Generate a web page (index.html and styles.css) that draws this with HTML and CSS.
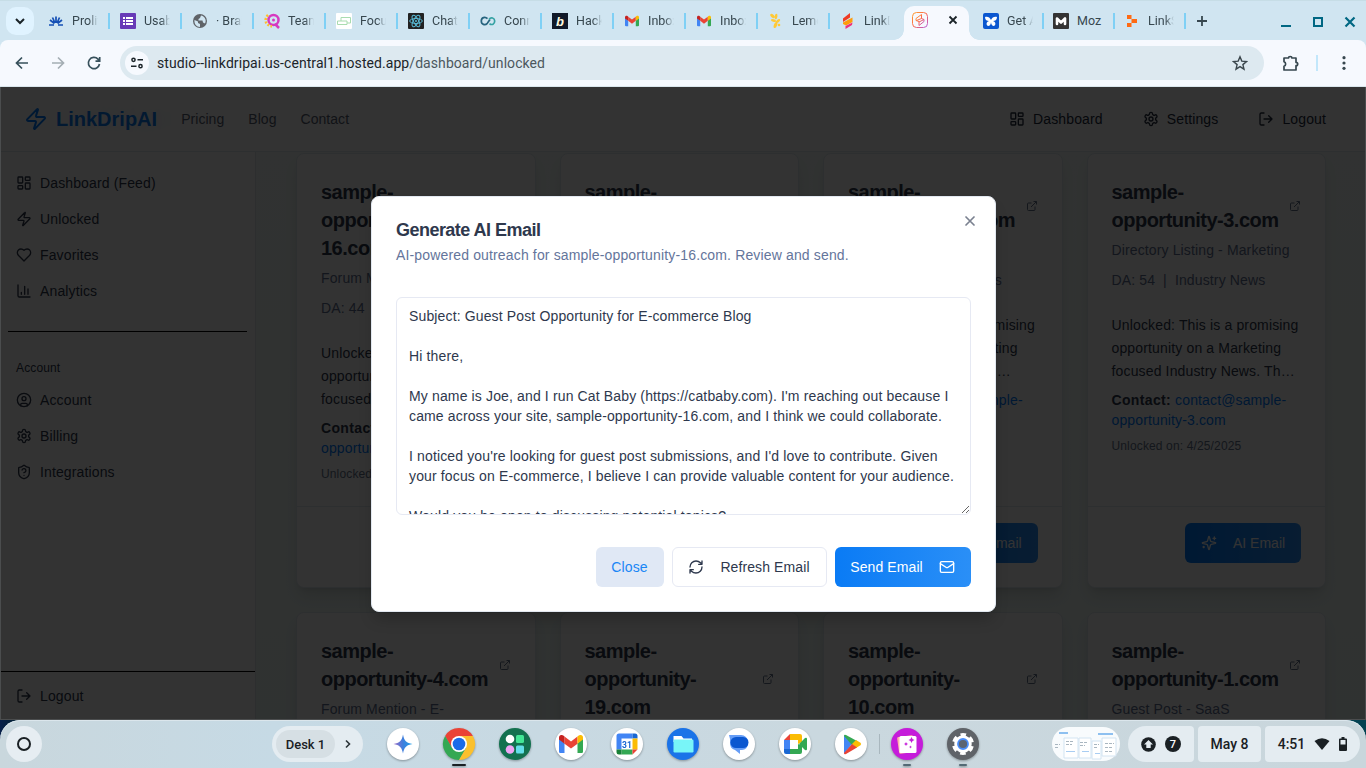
FILE: index.html
```html
<!DOCTYPE html>
<html lang="en">
<head>
<meta charset="utf-8">
<title>LinkDripAI</title>
<link rel="stylesheet" href="styles.css">
</head>
<body>
<svg class="defs" width="0" height="0">
<defs>
<linearGradient id="warm" x1="0" y1="0" x2="1" y2="1"><stop offset="0" stop-color="#ffa12e"/><stop offset=".5" stop-color="#f9654c"/><stop offset="1" stop-color="#b45be0"/></linearGradient>
<linearGradient id="ldg" x1="0" y1="0" x2="0" y2="1"><stop offset="0" stop-color="#ee3a24"/><stop offset=".5" stop-color="#ff9c0a"/><stop offset="1" stop-color="#f0177a"/></linearGradient>
<linearGradient id="gem" x1="0" y1="0" x2="1" y2="0"><stop offset="0" stop-color="#a06bc4"/><stop offset=".5" stop-color="#3f7fdd"/><stop offset="1" stop-color="#1ba0e8"/></linearGradient>
<symbol id="dash" viewBox="0 0 24 24"><rect width="7" height="9" x="3" y="3" rx="1"/><rect width="7" height="5" x="14" y="3" rx="1"/><rect width="7" height="9" x="14" y="12" rx="1"/><rect width="7" height="5" x="3" y="16" rx="1"/></symbol>
<symbol id="zap" viewBox="0 0 24 24"><path d="M4 14a1 1 0 0 1-.78-1.63l9.9-10.2a.5.5 0 0 1 .86.46l-1.92 6.02A1 1 0 0 0 13 10h7a1 1 0 0 1 .78 1.63l-9.9 10.2a.5.5 0 0 1-.86-.46l1.92-6.02A1 1 0 0 0 11 14z"/></symbol>
<symbol id="heart" viewBox="0 0 24 24"><path d="M19 14c1.49-1.46 3-3.21 3-5.5A5.5 5.5 0 0 0 16.5 3c-1.76 0-3 .5-4.5 2-1.5-1.5-2.74-2-4.5-2A5.5 5.5 0 0 0 2 8.5c0 2.3 1.5 4.05 3 5.5l7 7Z"/></symbol>
<symbol id="chart" viewBox="0 0 24 24"><path d="M3 3v16a2 2 0 0 0 2 2h16M18 17V9M13 17V5M8 17v-3"/></symbol>
<symbol id="user" viewBox="0 0 24 24"><circle cx="12" cy="12" r="10"/><circle cx="12" cy="10" r="3"/><path d="M7 20.662V19a2 2 0 0 1 2-2h6a2 2 0 0 1 2 2v1.662"/></symbol>
<symbol id="gear" viewBox="0 0 24 24"><path d="M12.22 2h-.44a2 2 0 0 0-2 2v.18a2 2 0 0 1-1 1.73l-.43.25a2 2 0 0 1-2 0l-.15-.08a2 2 0 0 0-2.73.73l-.22.38a2 2 0 0 0 .73 2.73l.15.1a2 2 0 0 1 1 1.72v.51a2 2 0 0 1-1 1.74l-.15.09a2 2 0 0 0-.73 2.73l.22.38a2 2 0 0 0 2.73.73l.15-.08a2 2 0 0 1 2 0l.43.25a2 2 0 0 1 1 1.73V20a2 2 0 0 0 2 2h.44a2 2 0 0 0 2-2v-.18a2 2 0 0 1 1-1.73l.43-.25a2 2 0 0 1 2 0l.15.08a2 2 0 0 0 2.73-.73l.22-.39a2 2 0 0 0-.73-2.73l-.15-.08a2 2 0 0 1-1-1.74v-.5a2 2 0 0 1 1-1.74l.15-.09a2 2 0 0 0 .73-2.73l-.22-.38a2 2 0 0 0-2.73-.73l-.15.08a2 2 0 0 1-2 0l-.43-.25a2 2 0 0 1-1-1.73V4a2 2 0 0 0-2-2z"/><circle cx="12" cy="12" r="3"/></symbol>
<symbol id="shield" viewBox="0 0 24 24"><path d="M20 13c0 5-3.5 7.5-7.66 8.95a1 1 0 0 1-.67-.01C7.5 20.5 4 18 4 13V6a1 1 0 0 1 1-1c2 0 4.5-1.2 6.24-2.72a1.17 1.17 0 0 1 1.52 0C14.51 3.81 17 5 19 5a1 1 0 0 1 1 1zM9.1 9a3 3 0 0 1 5.82 1c0 2-3 3-3 3M12 17h.01"/></symbol>
<symbol id="out" viewBox="0 0 24 24"><path d="M9 21H5a2 2 0 0 1-2-2V5a2 2 0 0 1 2-2h4M16 17l5-5-5-5M21 12H9"/></symbol>
<symbol id="ext" viewBox="0 0 24 24"><path d="M15 3h6v6M10 14 21 3M18 13v6a2 2 0 0 1-2 2H5a2 2 0 0 1-2-2V8a2 2 0 0 1 2-2h6"/></symbol>
<symbol id="spark" viewBox="0 0 24 24"><path d="M9.937 15.5A2 2 0 0 0 8.5 14.063l-6.135-1.582a.5.5 0 0 1 0-.962L8.5 9.936A2 2 0 0 0 9.937 8.5l1.582-6.135a.5.5 0 0 1 .963 0L14.063 8.5A2 2 0 0 0 15.5 9.937l6.135 1.581a.5.5 0 0 1 0 .964L15.5 14.063a2 2 0 0 0-1.437 1.437l-1.582 6.135a.5.5 0 0 1-.963 0zM20 3v4M22 5h-4M4 17v2M5 18H3"/></symbol>
<symbol id="refresh" viewBox="0 0 24 24"><path d="M3 12a9 9 0 0 1 9-9 9.75 9.75 0 0 1 6.74 2.74L21 8M21 3v5h-5M21 12a9 9 0 0 1-9 9 9.75 9.75 0 0 1-6.74-2.74L3 16M8 16H3v5"/></symbol>
<symbol id="mail" viewBox="0 0 24 24"><rect width="20" height="16" x="2" y="4" rx="2"/><path d="m22 7-8.97 5.7a1.94 1.94 0 0 1-2.06 0L2 7"/></symbol>
<symbol id="x" viewBox="0 0 24 24"><path d="M18 6 6 18M6 6l12 12"/></symbol>
<symbol id="gmail" viewBox="0 0 24 18"><path fill="#4285f4" d="M0 3v13.4C0 17.3.7 18 1.6 18H5.500V8.500Z"/><path fill="#34a853" d="M24 3v13.400c0 .9-.7 1.600-1.600 1.600H18.500V8.500Z"/><path fill="#ea4335" d="M5.500 8.700V1.600L12 6.500l6.500-4.900v7.100L12 13.600Z"/><path fill="#c5221f" d="M0 2.500C0 .3 2.500-.8 4.300.6L5.500 1.600v7.100L0 4.600Z"/><path fill="#fbbc04" d="M24 2.500C24 .3 21.500-.8 19.700.6L18.500 1.600v7.100L24 4.600Z"/></symbol>
</defs>
</svg>
<div class="screen">
<div class="tabstrip">
  <div class="tabsearch"><svg width="12" height="12" viewBox="0 0 12 12" fill="none" stroke="#1b2429" stroke-width="2"><path d="M2 4 6 8l4-4"/></svg></div>
  <div class="tabs">
    <div class="tab"><svg class="fav" viewBox="0 0 16 16" fill="none" stroke="#1550b5" stroke-width="1.700"><path d="M8 10V3.500M7 10 4.500 4.500M9 10l2.500-5.500M6.500 10.500 2 7M9.500 10.500 14 7M6 12H1M10 12h5"/></svg><span>Prolific</span></div>
    <div class="tab"><svg class="fav" viewBox="0 0 16 16"><rect width="16" height="16" rx="1" fill="#673ab7"/><path fill="#fff" d="M3 4h2v2H3zM6 4h7v2H6zM3 7h2v2H3zM6 7h7v2H6zM3 10h2v2H3zM6 10h7v2H6z"/></svg><span>Usability</span></div>
    <div class="tab"><svg class="fav" viewBox="0 0 16 16"><circle cx="8" cy="8" r="7" fill="#5f6368"/><path fill="#d0e5f1" d="M2.500 7 6 8.500v1.500l2 1v3C4.500 14 2 11 2.500 7ZM9 2.500 8 5 6.500 6v1.500h4L11 9.500l2 1C15 7 12.500 3 9 2.500Z"/></svg><span>· Brain</span></div>
    <div class="tab"><svg class="fav" viewBox="0 0 16 16" fill="none"><circle cx="9.500" cy="7" r="5" stroke="#d63ac0" stroke-width="2.500"/><path stroke="#d63ac0" stroke-width="2.500" d="m11 11 4 4"/><circle cx="9.500" cy="7" r="1.500" fill="#d63ac0"/><path stroke="#ffbd2e" stroke-width="2.600" stroke-dasharray="2 1.500" d="M4 2C0 6 1 12 8 13.500"/></svg><span>Team</span></div>
    <div class="tab"><svg class="fav" viewBox="0 0 16 16" fill="none"><rect width="16" height="16" rx="1" fill="#fff"/><path stroke="#a9dcb0" d="M5 8V4.500h9.500V10H11M1.500 8H11v3.500H1.500z"/></svg><span>Focus</span></div>
    <div class="tab"><svg class="fav" viewBox="0 0 16 16" fill="none" stroke="#58b9d4"><rect width="16" height="16" rx="1" fill="#222" stroke="none"/><ellipse cx="8" cy="8" rx="6.300" ry="2.500"/><ellipse cx="8" cy="8" rx="6.300" ry="2.500" transform="rotate(60 8 8)"/><ellipse cx="8" cy="8" rx="6.300" ry="2.500" transform="rotate(120 8 8)"/><circle cx="8" cy="8" r=".7"/></svg><span>ChatGPT</span></div>
    <div class="tab"><svg class="fav" viewBox="0 0 16 16" fill="none" stroke-width="1.700"><path stroke="#27647f" d="M7.500 5.700C5 3.300 1.300 4.500 1.300 8s3.700 4.700 6 2.300L10 6.500"/><path stroke="#35a2a3" d="M9 6.500C11 3.500 14.700 5 14.700 8s-2.700 4.500-5.200 2.700"/></svg><span>Connect</span></div>
    <div class="tab"><svg class="fav" viewBox="0 0 16 16"><rect width="16" height="16" fill="#111a29"/><text x="4" y="13" class="b-mark">b</text></svg><span>Hack</span></div>
    <div class="tab"><svg class="fav"><use href="#gmail" x="1" y="2" width="14" height="12"/></svg><span>Inbox</span></div>
    <div class="tab"><svg class="fav"><use href="#gmail" x="1" y="2" width="14" height="12"/></svg><span>Inbox</span></div>
    <div class="tab"><svg class="fav" viewBox="0 0 16 16" fill="#ffc936"><ellipse cx="4.500" cy="3" rx="2.800" ry="1.500" transform="rotate(40 4.500 3)"/><ellipse cx="8" cy="3.500" rx="1.400" ry="2.800" transform="rotate(10 8 3.500)"/><ellipse cx="5.500" cy="7.500" rx="2.600" ry="1.400" transform="rotate(15 5.500 7.500)"/><ellipse cx="10" cy="8" rx="1.400" ry="2.600" transform="rotate(50 10 8)"/><ellipse cx="7.500" cy="12" rx="1.600" ry="3.200" transform="rotate(20 7.500 12)"/><circle cx="11" cy="12" r="1.300"/></svg><span>Lemon</span></div>
    <div class="tab last"><svg class="fav" viewBox="0 0 16 16"><path fill="#ee3a24" d="M10 0v4.500L3 9V5.500Z"/><path fill="#ff9c0a" d="M3 9.500 12.500 4.500V9L6 12.500 3 11Z"/><path fill="#f0307a" d="m12.500 9.500-.5 2.500-6.500 4v-3Z"/></svg><span>LinkDrip</span></div>
    <div class="tab active"><svg class="fav" viewBox="0 0 16 16" fill="none" stroke="url(#warm)"><rect x=".5" y=".5" width="15" height="15" rx="4"/><path d="M9.500 2.500v4l2.500 1v2L7 13.500v-4L4 8.500v-2ZM4.500 8.500l5-2M7 10l5-2.500"/></svg><svg class="close" width="10" height="10" viewBox="0 0 10 10" stroke="#1b2429" stroke-width="1.800"><path d="m1.500 1.500 7 7M8.500 1.500l-7 7"/></svg></div>
    <div class="tab after"><svg class="fav" viewBox="0 0 16 16"><rect width="16" height="16" rx="2" fill="#0b57d0"/><path fill="#fff" d="M8 7c-1-3-4-4-6-3 0 3 2 4 4 4-3 1-3 4-1 5 2 0 3-2 3-4 0 2 1 4 3 4 2-1 2-4-1-5 2 0 4-1 4-4-2-1-5 0-6 3Z"/></svg><span>Get AI</span></div>
    <div class="tab after"><svg class="fav" viewBox="0 0 16 16"><rect width="16" height="16" rx="1" fill="#333"/><path d="M4 11V5.500l4 4 4-4V11" fill="none" stroke="#fff" stroke-width="2.600" stroke-linejoin="round" stroke-linecap="round"/></svg><span class="short">Moz</span></div>
    <div class="tab after"><svg class="fav" viewBox="0 0 16 16" fill="#ff6a13"><path d="M3 2h4.500v4H3zM7.500 6H13v4H7.500zM3 10h4.500v4H3z"/></svg><span>LinkS</span></div>
  </div>
  <svg class="plus" width="12" height="12" viewBox="0 0 12 12" stroke="#37474f" stroke-width="1.800"><path d="M6 1v10M1 6h10"/></svg>
  <div class="winctl">
    <svg width="12" height="12" viewBox="0 0 12 12" fill="none" stroke="#006783" stroke-width="2"><path d="M1 10h10"/></svg>
    <svg width="12" height="12" viewBox="0 0 12 12" fill="none" stroke="#006783" stroke-width="2"><path d="M2 2h8v8H2z"/></svg>
    <svg width="12" height="12" viewBox="0 0 12 12" fill="none" stroke="#006783" stroke-width="2.200"><path d="m1.500 1.500 9 9M10.500 1.500l-9 9"/></svg>
  </div>
</div>
<div class="toolbar">
  <svg class="nav" viewBox="0 0 16 16"><path d="M14 8H3M8 2.500 2.500 8 8 13.500"/></svg>
  <svg class="nav off" viewBox="0 0 16 16"><path d="M2 8h11M8 2.500 13.500 8 8 13.500"/></svg>
  <svg class="nav" viewBox="0 0 16 16"><path d="M13.500 9A5.600 5.600 0 1 1 12 4.100L13.500 6M13.700 2v4.200H9.500"/></svg>
  <div class="omnibox">
    <div class="site"><svg width="14" height="14" viewBox="0 0 14 14" fill="none" stroke="#1b2429" stroke-width="1.500"><circle cx="3.500" cy="3.800" r="1.600"/><path d="M7.500 3.800H13M1 10.200h5.500"/><circle cx="10.500" cy="10.200" r="1.600"/></svg></div>
    <div class="url">studio--linkdripai.us-central1.hosted.app<span>/dashboard/unlocked</span></div>
    <svg class="star" width="16" height="16" viewBox="0 0 16 16" fill="none" stroke="#3a464c" stroke-width="1.400"><path d="m8 1.800 1.800 4.300 4.700.4-3.600 3.100 1.100 4.600L8 11.700l-4 2.500 1.100-4.600L1.500 6.500l4.700-.4Z"/></svg>
  </div>
  <svg class="puzzle" width="18" height="18" viewBox="0 0 18 18" fill="none" stroke="#37474f" stroke-width="1.700" stroke-linejoin="round"><path d="M2 4h4.500a1.700 1.500 0 0 1 3.400 0H14v4.300a1.700 1.700 0 0 1 0 3.400V16H2v-3.800a2.300 2.300 0 0 0 0-4.400Z"/></svg>
  <i class="tsep"></i>
  <svg class="dots" width="4" height="14" viewBox="0 0 4 14" fill="#37474f"><circle cx="2" cy="1.700" r="1.600"/><circle cx="2" cy="7" r="1.600"/><circle cx="2" cy="12.300" r="1.600"/></svg>
</div>
<div class="viewport">
  <header class="header">
    <svg class="logo"><use href="#zap"/></svg><b class="brand">LinkDripAI</b>
    <nav class="links"><span>Pricing</span><span>Blog</span><span>Contact</span></nav>
    <nav class="actions">
      <span><svg class="ic"><use href="#dash"/></svg>Dashboard</span>
      <span><svg class="ic"><use href="#gear"/></svg>Settings</span>
      <span><svg class="ic"><use href="#out"/></svg>Logout</span>
    </nav>
  </header>
  <div class="app">
    <aside class="sidebar">
      <nav class="menu">
        <span><svg class="ic"><use href="#dash"/></svg>Dashboard (Feed)</span>
        <span><svg class="ic"><use href="#zap"/></svg>Unlocked</span>
        <span><svg class="ic"><use href="#heart"/></svg>Favorites</span>
        <span><svg class="ic"><use href="#chart"/></svg>Analytics</span>
      </nav>
      <hr>
      <div class="group">Account</div>
      <nav class="menu">
        <span><svg class="ic"><use href="#user"/></svg>Account</span>
        <span><svg class="ic"><use href="#gear"/></svg>Billing</span>
        <span><svg class="ic"><use href="#shield"/></svg>Integrations</span>
      </nav>
      <div class="bottom"><span><svg class="ic"><use href="#out"/></svg>Logout</span></div>
    </aside>
    <main class="grid">
      <article class="card">
        <div class="title"><h3>sample-<br>opportunity-<br>16.com</h3><svg class="ext"><use href="#ext"/></svg></div>
        <p class="desc">Forum Mention</p><p class="da">DA: 44</p>
        <p class="body">Unlocked: This is a promising<br>opportunity on a<br>focused</p>
        <p class="contact"><b>Contact:</b> <a>contact@sample-<br>opportunity-16.com</a></p><p class="date">Unlocked on: 4/25/2025</p>
        <footer><button class="ai"><svg class="ic"><use href="#spark"/></svg>AI Email</button></footer>
      </article>
      <article class="card">
        <div class="title"><h3>sample-<br>opportunity-6.com</h3><svg class="ext"><use href="#ext"/></svg></div>
        <footer><button class="ai"><svg class="ic"><use href="#spark"/></svg>AI Email</button></footer>
      </article>
      <article class="card">
        <div class="title"><h3>sample-<br>opportunity-7.com</h3><svg class="ext"><use href="#ext"/></svg></div>
        <p class="desc">Guest Post</p><p class="da">DA: 54 &nbsp;|&nbsp; Industry News</p>
        <p class="body">Unlocked: This is a promising<br>opportunity on a Marketing<br>focused Industry News.…</p>
        <p class="contact"><b>Contact:</b> <a>contact@sample-<br>opportunity-7.com</a></p><p class="date">Unlocked on: 4/25/2025</p>
        <footer><button class="ai"><svg class="ic"><use href="#spark"/></svg>AI Email</button></footer>
      </article>
      <article class="card">
        <div class="title"><h3>sample-<br>opportunity-3.com</h3><svg class="ext"><use href="#ext"/></svg></div>
        <p class="desc">Directory Listing - Marketing</p><p class="da">DA: 54 &nbsp;|&nbsp; Industry News</p>
        <p class="body">Unlocked: This is a promising<br>opportunity on a Marketing<br>focused Industry News. Th…</p>
        <p class="contact"><b>Contact:</b> <a>contact@sample-<br>opportunity-3.com</a></p><p class="date">Unlocked on: 4/25/2025</p>
        <footer><button class="ai"><svg class="ic"><use href="#spark"/></svg>AI Email</button></footer>
      </article>
      <article class="card"><div class="title"><h3>sample-<br>opportunity-4.com</h3><svg class="ext"><use href="#ext"/></svg></div><p class="desc">Forum Mention - E-</p></article>
      <article class="card"><div class="title"><h3>sample-<br>opportunity-<br>19.com</h3><svg class="ext"><use href="#ext"/></svg></div></article>
      <article class="card"><div class="title"><h3>sample-<br>opportunity-<br>10.com</h3><svg class="ext"><use href="#ext"/></svg></div></article>
      <article class="card"><div class="title"><h3>sample-<br>opportunity-1.com</h3><svg class="ext"><use href="#ext"/></svg></div><p class="desc">Guest Post - SaaS</p></article>
    </main>
  </div>
  <div class="overlay">
    <section class="modal">
      <svg class="ic dismiss"><use href="#x"/></svg>
      <h2>Generate AI Email</h2>
      <p class="sub">AI-powered outreach for sample-opportunity-16.com. Review and send.</p>
      <textarea>Subject: Guest Post Opportunity for E-commerce Blog

Hi there,

My name is Joe, and I run Cat Baby (https://catbaby.com). I'm reaching out because I came across your site, sample-opportunity-16.com, and I think we could collaborate.

I noticed you're looking for guest post submissions, and I'd love to contribute. Given your focus on E-commerce, I believe I can provide valuable content for your audience.

Would you be open to discussing potential topics?</textarea>
      <div class="btns">
        <button class="btn soft">Close</button>
        <button class="btn line"><svg class="ic"><use href="#refresh"/></svg>Refresh Email</button>
        <button class="btn main">Send Email<svg class="ic"><use href="#mail"/></svg></button>
      </div>
    </section>
  </div>
</div>
<div class="wall"><div class="shelf">
  <div class="launcher"><i></i></div>
  <div class="desk"><b>Desk 1</b><svg width="8" height="10" viewBox="0 0 8 10" fill="none" stroke="#2b3338" stroke-width="1.600"><path d="m2 1.500 3.500 3.500L2 8.500"/></svg></div>
  <div class="apps">
    <svg class="app-ic" viewBox="0 0 32 32"><circle cx="16" cy="16" r="16" fill="#fff"/><path fill="url(#gem)" d="M16 6.500c1 6 3.500 8.500 9.500 9.500-6 1-8.500 3.500-9.500 9.500-1-6-3.500-8.500-9.500-9.500 6-1 8.500-3.500 9.500-9.500Z"/></svg>
    <svg class="app-ic" viewBox="0 0 32 32"><path fill="#ea4335" d="M2.140 8A16 16 0 0 1 29.860 8L16 8.500 9 20Z"/><path fill="#34a853" d="M2.140 8A16 16 0 0 0 16 32l7-12H9Z"/><path fill="#fbc02d" d="M29.860 8A16 16 0 0 1 16 32l7-12-7-12Z"/><circle cx="16" cy="16" r="8" fill="#fff"/><circle cx="16" cy="16" r="6.300" fill="#1a6be8"/><rect x="9" y="36" width="14" height="2" rx="1" fill="#1a2024"/></svg>
    <svg class="app-ic" viewBox="0 0 32 32"><circle cx="16" cy="16" r="16" fill="#13714f"/><circle cx="11" cy="11" r="4.300" fill="#fff"/><rect x="17" y="7" width="8" height="8" rx="1.500" fill="#42e695"/><circle cx="11" cy="21.500" r="4.300" fill="#efa5f3"/><rect x="17" y="17.500" width="8" height="8" rx="1.500" fill="#63dfe9"/></svg>
    <svg class="app-ic" viewBox="0 0 32 32"><circle cx="16" cy="16" r="16" fill="#fff"/><use href="#gmail" x="4" y="7" width="24" height="18"/></svg>
    <svg class="app-ic" viewBox="0 0 32 32"><circle cx="16" cy="16" r="16" fill="#fff"/><path fill="#4285f4" d="M5.500 8q0-2.500 2.500-2.500h13.500v5h-11v11h-5Z"/><path fill="#1967d2" d="M21.500 5.500H24q2.500 0 2.500 2.500v2.500h-5Z"/><path fill="#fbbc04" d="M21.500 10.500h5v11h-5Z"/><path fill="#34a853" d="M10.500 21.500h11v5h-11Z"/><path fill="#188038" d="M5.500 21.500h5v5H8q-2.500 0-2.500-2.500Z"/><path fill="#ea4335" d="M21.500 21.500h5l-5 5Z"/><text x="16" y="19.500" text-anchor="middle" class="cal">31</text></svg>
    <svg class="app-ic" viewBox="0 0 32 32"><circle cx="16" cy="16" r="16" fill="#1a73e8"/><path fill="#fff" d="M6.500 8h8l2 2.500H25V14H6.500Z"/><rect x="6.500" y="11.500" width="20" height="13" rx="1.200" fill="#78f5f8"/></svg>
    <svg class="app-ic" viewBox="0 0 32 32"><circle cx="16" cy="16" r="16" fill="#fff"/><path fill="#669df6" d="M6 7h12a7 7 0 0 1 7 7v2a6 6 0 0 1-6 6h-2v4l-5-4a7 7 0 0 1-5-7v-4Z"/><rect x="7.500" y="9" width="18" height="11" rx="5.500" fill="#0b57d0"/></svg>
    <svg class="app-ic" viewBox="0 0 32 32"><circle cx="16" cy="16" r="16" fill="#fff"/><path fill="#ea4335" d="m11 6-6 6h6Z"/><path fill="#4285f4" d="M5 12h6v9H5Z"/><path fill="#1967d2" d="M5 21h6v5H7q-2 0-2-2Z"/><path fill="#fbbc04" d="M11 6h10q2 0 2 2v6l-4 2v-4h-8Z"/><path fill="#34a853" d="M11 21h8v-5l4 2v6q0 2-2 2H11ZM20 16l6-6q2-1 2 1v10q0 2-2 1Z"/></svg>
    <svg class="app-ic" viewBox="0 0 32 32"><circle cx="16" cy="16" r="16" fill="#fff"/><path fill="#4285f4" d="M9 7v19l8-10Z"/><path fill="#34a853" d="M9 8q0-2 2-1l11 6-5 4Z"/><path fill="#fbbc04" d="m21 12 4.500 2.800q1.300 1.200 0 2.400L21 20l-4-4Z"/><path fill="#ea4335" d="M9 25q0 2 2 1l11-6.500-5-3.500Z"/></svg>
    <i class="shelf-sep"></i>
    <svg class="app-ic" viewBox="0 0 32 32"><circle cx="16" cy="16" r="16" fill="#c51cda"/><rect x="7" y="8" width="16" height="17" rx="1.500" fill="#ffb3a8" transform="rotate(-8 15 16)"/><rect x="8.500" y="8" width="17" height="17" rx="1.500" fill="#fff"/><path fill="#c51cda" d="M20.500 9q.5 2.500 3 3-2.500.5-3 3-.5-2.500-3-3 2.500-.5 3-3ZM15 14q.3 1.700 2 2-1.700.3-2 2-.3-1.700-2-2 1.700-.3 2-2ZM19.500 17.500q.2 1.300 1.500 1.500-1.300.2-1.500 1.500-.2-1.300-1.500-1.500 1.300-.2 1.500-1.500Z"/><rect x="12" y="36" width="8" height="2" rx="1" fill="#536a75"/></svg>
    <svg class="app-ic" viewBox="0 0 32 32"><circle cx="16" cy="16" r="16" fill="#5f6368"/><circle cx="16" cy="16" r="7" fill="#fff" stroke="#fff" stroke-width="3.500"/><circle cx="16" cy="16" r="9.200" fill="none" stroke="#fff" stroke-width="3.600" stroke-dasharray="5.400 4.234" stroke-dashoffset="-2.100"/><circle cx="16" cy="16" r="5" fill="#5b6472" stroke="#4a8df8" stroke-width="1.800"/><rect x="12" y="36" width="8" height="2" rx="1" fill="#536a75"/></svg>
  </div>
  <div class="tray">
    <svg class="thumbs" width="68" height="36" viewBox="0 0 68 36"><rect y="1" width="68" height="34" rx="17" fill="#f8fbfd"/><path fill="#8ec0f0" d="M7 6h9v2H7zM46 7h15v2H46zM36 18h3v1h-3z"/><path stroke="#d3e4f2" fill="#fff" d="M12 12h14v20H12zM27 12h12v20H27zM40 15h9v18h-9zM50 12h14v18H50z"/><path stroke="#a9b6c0" stroke-dasharray="3 1" d="M14 15.500h8M14 18.500h6M28 16.500h7M28 19.500h5M42 18.500h5M42 21.500h4M53 17.500h9M53 21.500h8M53 25.500h7M3 18.500h5M3 21.500h4"/><path stroke="#a9cdf2" d="M14 25.500h9M30 25.500h7M43 27.500h5"/></svg>
    <div class="pill first"><svg width="15" height="15" viewBox="0 0 15 15"><circle cx="7.500" cy="7.500" r="7.300" fill="#1a2024"/><path fill="#e4ecf1" d="m7.500 3 4.500 4.500H9.700V11H5.300V7.500H3Z"/></svg><span class="count">7</span></div>
    <div class="pill">May 8</div>
    <div class="pill end">4:51<svg width="16" height="12" viewBox="0 0 16 12"><path fill="#1a2024" d="M.500 3Q8-2.500 15.500 3L8 12Z"/></svg><svg width="8" height="14" viewBox="0 0 8 14"><path fill="#1a2024" fill-rule="evenodd" d="M2.500 0h3v1.500H7q1 0 1 1V13q0 1-1 1H1q-1 0-1-1V2.500q0-1 1-1h1.500ZM1.500 3v4.500h5V3Z"/></svg></div>
  </div>
</div></div>
</div>
</body>
</html>
```
FILE: styles.css
```css
* { box-sizing: border-box; }
body { margin: 0; font-family: "Liberation Sans", Arial, sans-serif; }
h2, h3, p { margin: 0; }
.defs { position: absolute; }
.screen { width: 1366px; height: 768px; overflow: hidden; display: flex; flex-direction: column; background: #d0e5f1; }
svg { flex: none; }

.tabstrip { height: 40px; flex: none; display: flex; align-items: center; padding-left: 6px; background: #d0e5f1; border-top: 1px solid #c6dde6; font: 12.5px Roboto, sans-serif; color: #37474f; }
.tabsearch { width: 28px; height: 28px; border-radius: 10px; background: #e0f3ff; display: grid; place-items: center; }
.tabs { display: flex; align-items: center; height: 39px; padding-left: 4px; }
.tab { width: 72px; height: 16px; display: flex; align-items: center; gap: 8px; padding-left: 10px; border-right: 2px solid #7fd0f5; }
.tab span { width: 26px; overflow: hidden; white-space: nowrap; -webkit-mask-image: linear-gradient(90deg, #000 65%, transparent); mask-image: linear-gradient(90deg, #000 65%, transparent); }
.tab .short { -webkit-mask-image: none; mask-image: none; }
.tab.last { border-right-color: transparent; }
.tab.active { position: relative; width: 65px; height: 34px; align-self: flex-end; background: #f6f9fe; border: 0; border-radius: 10px 10px 0 0; padding: 0 11px 6px 8px; justify-content: space-between; margin-left: 2px; }
.tab.active::before, .tab.active::after { content: ""; position: absolute; bottom: 0; width: 10px; height: 10px; }
.tab.active::before { right: 100%; background: radial-gradient(circle at 0 0, transparent 9.5px, #f6f9fe 10px); }
.tab.active::after { left: 100%; background: radial-gradient(circle at 100% 0, transparent 9.5px, #f6f9fe 10px); }
.tab.after { width: 71px; padding-left: 9px; }
.tab.active + .after { width: 75px; padding-left: 14px; }
.fav { width: 16px; height: 16px; }
.b-mark { font: italic bold 13px "Liberation Sans", sans-serif; fill: #fffbe0; }
.plus { margin-left: 10px; }
.winctl { margin-left: auto; display: flex; gap: 20px; padding: 2px 10px 0 0; }

.toolbar { height: 47px; flex: none; display: flex; align-items: center; padding: 0 20px 0 14px; background: #f6f9fe; border-radius: 8px 8px 0 0; border-bottom: 1px solid #dae6ec; }
.nav { width: 16px; height: 16px; margin-right: 20px; fill: none; stroke: #37505b; stroke-width: 1.7; }
.nav.off { stroke: #a4aeb4; }
.nav:nth-child(3) { margin-right: 18px; }
.omnibox { width: 1144px; flex: none; height: 34px; border-radius: 17px; background: #dde9f0; display: flex; align-items: center; padding: 0 16px 0 5px; }
.site { width: 24px; height: 24px; border-radius: 50%; background: #f6f9fe; display: grid; place-items: center; }
.url { margin-left: 8px; font: 14px Roboto, sans-serif; letter-spacing: .07px; color: #1b2429; }
.url span { color: #4c585e; }
.star { margin-left: auto; }
.puzzle { margin-left: 18px; }
.tsep { flex: none; width: 2px; height: 16px; background: #c2e7fb; margin-left: 16px; }
.dots { margin-left: auto; }

.viewport { position: relative; height: 633px; flex: none; overflow: hidden; background: #fff; font-size: 14px; letter-spacing: .13px; color: #2e384d; }
.ic { width: 16px; height: 16px; fill: none; stroke: currentColor; stroke-width: 2; stroke-linecap: round; stroke-linejoin: round; }
.header { height: 65px; border-bottom: 1px solid #e2e8f0; display: flex; align-items: center; padding: 0 24px; }
.logo { width: 24px; height: 24px; fill: none; stroke: #007bff; stroke-width: 2; }
.brand { margin-left: 8px; font-size: 20px; letter-spacing: 0; color: #0a7cf5; text-shadow: 14px 0 18px #007bff22; }
.links { display: flex; gap: 24px; margin-left: 24px; letter-spacing: .05px; color: #566072; }
.actions { margin-left: auto; display: flex; gap: 8px; color: #222b3d; }
.actions span { display: flex; align-items: center; gap: 8px; padding: 0 16px; height: 36px; }
.app { display: flex; height: 568px; }
.sidebar { width: 256px; flex: none; border-right: 1px solid #dfe6e8; display: flex; flex-direction: column; padding-top: 13px; }
.menu span { height: 36px; display: flex; align-items: center; gap: 8px; padding-left: 16px; }
.sidebar hr { width: 239px; margin: 22px 8px 0; border: 0; border-top: 1px solid #000; }
.group { font-size: 12px; padding: 29px 16px 0; height: 50px; line-height: 14px; }
.bottom { margin-top: auto; border-top: 1px solid #000; height: 49px; padding: 16px; }
.bottom span { display: flex; align-items: center; gap: 8px; }
.grid { flex: 1; display: grid; grid-template-columns: repeat(4, 1fr); grid-template-rows: 435px 435px; column-gap: 24px; row-gap: 24px; padding: 1px 40px; background: linear-gradient(#f2faf7, #ecf7f4); overflow: hidden; height: 568px; }
.card { background: #fff; border: 1px solid #e2e8f0; border-radius: 8px; padding: 24px 24px 0; display: flex; flex-direction: column; box-shadow: 0 10px 15px -3px #0000001c, 0 4px 6px -4px #0000001c; white-space: nowrap; min-width: 0; }
.title { display: flex; align-items: center; justify-content: space-between; }
.title h3 { font-size: 20px; line-height: 28px; letter-spacing: -.5px; }
.ext { width: 12px; height: 12px; fill: none; stroke: #64748b; stroke-width: 2; margin-left: -12px; }
.desc, .da { line-height: 20px; margin-top: 6px; color: #5f6f91; }
.da { margin-top: 10px; }
.body { line-height: 22.75px; margin-top: 24px; letter-spacing: .15px; }
.contact { line-height: 20px; margin-top: 8px; }
.contact b { letter-spacing: .35px; }
.contact a { color: #007bff; }
.date { font-size: 12px; letter-spacing: .14px; line-height: 16px; margin-top: 8px; color: #64748b; }
.card footer { margin: auto -24px 0; border-top: 1px solid #e2e8f0; padding: 16px 24px 24px; display: flex; justify-content: flex-end; }
button { font: inherit; letter-spacing: inherit; border: 0; }
.ai { height: 40px; width: 116px; padding: 0 0 0 16px; letter-spacing: 0; border-radius: 6px; background: linear-gradient(90deg, #007bff, #2a8ff7); color: #fff; display: flex; align-items: center; gap: 16px; }

.overlay { position: absolute; inset: 0; background: rgba(0, 0, 0, .8); display: flex; align-items: center; justify-content: center; border: 1px solid #4b4d4e; border-top: 0; }
.modal { position: relative; width: 625px; height: 416px; margin-top: 1px; background: #fff; border: 1px solid #e2e8f0; border-radius: 8px; padding: 24px 24px 24px 24.5px; display: flex; flex-direction: column; box-shadow: 0 10px 15px -3px #0003; }
.dismiss { position: absolute; right: 16.5px; top: 16px; color: #7b8190; stroke-width: 2.6; }
.modal h2 { font-size: 18px; line-height: 18px; letter-spacing: -.53px; }
.sub { line-height: 20px; margin-top: 6px; letter-spacing: .15px; color: #64759b; }
.modal textarea { display: block; width: 100%; height: 218px; margin-top: 32px; padding: 8px 12px; border: 1px solid #e6e9f3; border-radius: 6px; font: 14px/20px "Liberation Sans", Arial, sans-serif; letter-spacing: .14px; color: #2e384d; background: #fff; outline: 0; overflow: hidden; resize: vertical; }
.btns { display: flex; justify-content: flex-end; gap: 8px; margin-top: 32px; }
.btn { height: 40px; border-radius: 6px; padding: 0; display: flex; align-items: center; justify-content: center; gap: 16px; letter-spacing: .1px; color: #2e384d; background: #fff; }
.soft { width: 68px; background: #e0e8f5; color: #1a86f5; }
.line { width: 155px; border: 1px solid #e6e9f3; }
.main { width: 136px; background: linear-gradient(90deg, #0a7bf5, #2a8ff7); color: #fff; }

.wall { height: 48px; background: linear-gradient(90deg, #08204a, #022 2%, #044252 98%); }
.shelf { height: 48px; border-radius: 20px 20px 0 0; background: linear-gradient(90deg, #c9d7dd, #c6dae5 20%, #cad8df 60%, #c9d6dc); box-shadow: inset 0 1px #dbe6ec; display: flex; align-items: center; padding: 0 6px; font: 500 14px Roboto, sans-serif; color: #1a2024; }
.launcher { width: 36px; height: 36px; border-radius: 50%; background: #e6edf2; display: grid; place-items: center; }
.launcher i { width: 14px; height: 14px; border: 2px solid #1a2024; border-radius: 50%; }
.desk { width: 91px; height: 36px; border-radius: 18px; background: #e4ecf1; margin-left: 230px; display: flex; align-items: center; padding: 4px; gap: 9px; font-size: 13px; }
.desk b { width: 59px; height: 28px; border-radius: 14px; background: #d6dfe4; display: grid; place-items: center; font-weight: 500; }
.apps { display: flex; align-items: center; gap: 24px; margin-left: 24px; }
.app-ic { width: 32px; height: 32px; overflow: visible; filter: drop-shadow(0 1px 1px #0005); }
.shelf-sep { width: 1px; height: 20px; background: #a9b7be; margin: 0 -12.5px; }
.cal { font: bold 8.5px Roboto, sans-serif; fill: #1967d2; }
.tray { margin-left: auto; display: flex; align-items: center; gap: 4px; }
.thumbs { margin-right: 4px; }
.pill { height: 36px; width: 63px; border-radius: 4px; background: #e4ecf1; display: flex; align-items: center; justify-content: center; gap: 9px; }
.first { width: 66px; border-radius: 18px 4px 4px 18px; }
.end { width: 95px; border-radius: 4px 18px 18px 4px; }
.count { width: 16px; height: 16px; border-radius: 50%; background: #1a2024; color: #fff; font-size: 11px; display: grid; place-items: center; }
```
